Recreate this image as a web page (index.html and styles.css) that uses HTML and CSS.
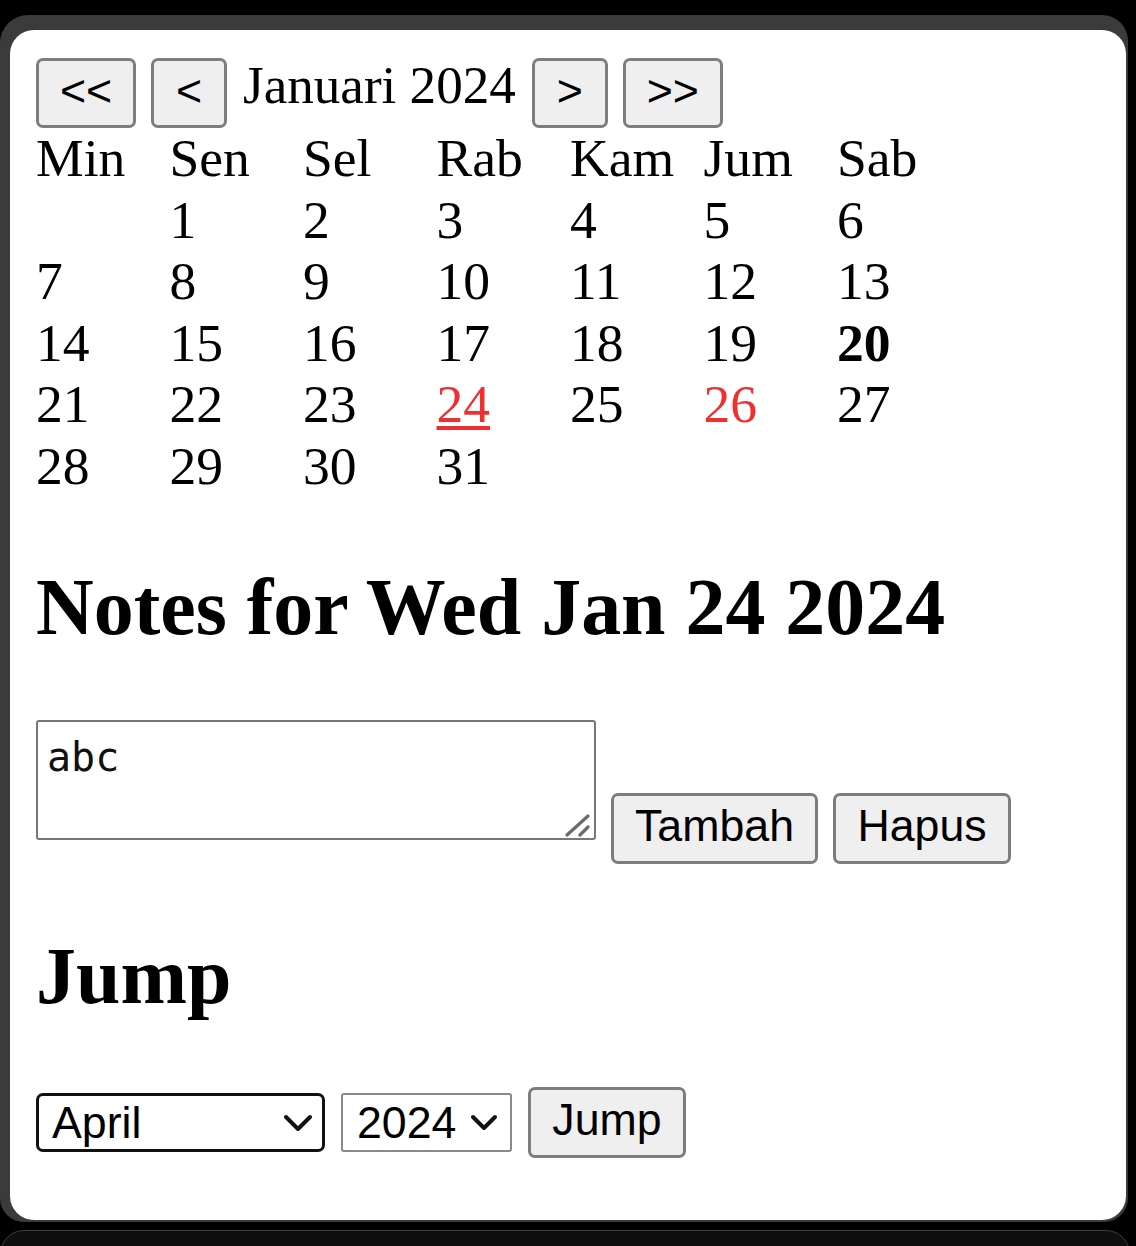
FILE: index.html
```html
<!DOCTYPE html>
<html lang="id">
<head>
<meta charset="utf-8">
<title>Kalender</title>
<link rel="stylesheet" href="styles.css">
</head>
<body>
<div class="frame">
  <div class="panel">
    <div class="nav">
      <button class="btn nav-wide">&lt;&lt;</button>
      <button class="btn nav-narrow">&lt;</button>
      <span class="month">Januari 2024</span>
      <button class="btn nav-narrow">&gt;</button>
      <button class="btn nav-wide">&gt;&gt;</button>
    </div>
    <div class="cal">
      <div>Min</div><div>Sen</div><div>Sel</div><div>Rab</div><div>Kam</div><div>Jum</div><div>Sab</div>
      <div></div><div>1</div><div>2</div><div>3</div><div>4</div><div>5</div><div>6</div>
      <div>7</div><div>8</div><div>9</div><div>10</div><div>11</div><div>12</div><div>13</div>
      <div>14</div><div>15</div><div>16</div><div>17</div><div>18</div><div>19</div><div class="today">20</div>
      <div>21</div><div>22</div><div>23</div><div class="selected">24</div><div>25</div><div class="has-note">26</div><div>27</div>
      <div>28</div><div>29</div><div>30</div><div>31</div>
    </div>

    <h2 class="title">Notes for Wed Jan 24 2024</h2>

    <div class="note-row">
      <div class="ta-wrap">
        <textarea class="note">abc</textarea>
        <svg class="grip" width="26" height="24" viewBox="0 0 26 24"><path d="M2 22 L23 3 M15 22 L23 14" stroke="#6b6b6b" stroke-width="3.2" stroke-linecap="round" fill="none"/></svg>
      </div>
      <button class="btn btn-add">Tambah</button>
      <button class="btn btn-del">Hapus</button>
    </div>

    <h2 class="title jump-title">Jump</h2>

    <div class="jump-row">
      <div class="sel-wrap">
        <select class="sel sel-month focused"><option>April</option></select>
        <svg class="chev chev-month" width="32" height="22" viewBox="0 0 32 22"><path d="M4 5 L16 17 L28 5" stroke="#111" stroke-width="4" stroke-linecap="round" stroke-linejoin="round" fill="none"/></svg>
      </div>
      <div class="sel-wrap">
        <select class="sel sel-year"><option>2024</option></select>
        <svg class="chev chev-year" width="30" height="22" viewBox="0 0 30 22"><path d="M4 5 L15 16 L26 5" stroke="#111" stroke-width="4" stroke-linecap="round" stroke-linejoin="round" fill="none"/></svg>
      </div>
      <button class="btn btn-jump">Jump</button>
    </div>
  </div>
</div>
<div class="next"></div>
</body>
</html>
```

FILE: styles.css
```css
html, body {
  margin: 0;
  padding: 0;
  background: #000;
  height: 1246px;
  overflow: hidden;
}

.frame {
  box-sizing: border-box;
  margin-top: 15px;
  width: 1128px;
  height: 1207px;
  background: #3b3b3b;
  border-radius: 28px 26px 24px 24px;
  padding: 15px 2px 2px 10px;
}

.panel {
  box-sizing: border-box;
  height: 100%;
  background: #fff;
  border-radius: 24px;
  padding: 28px 26px 0 26px;
  font-family: "Liberation Serif", "Times New Roman", serif;
  color: #000;
}

.next {
  box-sizing: border-box;
  margin-top: 8px;
  width: 1130px;
  height: 40px;
  background: #0e0e0f;
  border: 1px solid #3d3d3f;
  border-radius: 24px 24px 0 0;
}

/* buttons */
.btn {
  box-sizing: border-box;
  font-family: "Liberation Sans", Arial, sans-serif;
  font-size: 44.7px;
  color: #000;
  background: #efefef;
  border: 3px solid #7d7d7d;
  border-radius: 7px;
  padding: 0 0 5px 0;
  margin: 0;
  text-align: center;
}

/* header navigation */
.nav {
  display: flex;
  align-items: flex-start;
  gap: 15px;
  height: 70px;
}
.nav .btn {
  height: 70px;
}
.nav-wide { width: 100px; }
.nav-narrow { width: 76px; }
.month {
  font-size: 53.1px;
  line-height: 54px;
  margin: 0 1px;
}

/* calendar grid */
.cal {
  display: grid;
  grid-template-columns: repeat(7, 133.5px);
  grid-auto-rows: 61.6px;
  font-size: 53.6px;
  line-height: 61.6px;
}
.today { font-weight: bold; }
.selected {
  color: #ee3030;
  text-decoration: underline;
  text-decoration-thickness: 4px;
  text-underline-offset: 4px;
}
.has-note { color: #ee3030; }

/* headings */
.title {
  font-size: 79.9px;
  font-weight: bold;
  line-height: 92px;
  margin: 63px 0 67px 0;
}
.jump-title {
  margin: 66px 0 65px 0;
}

/* note row */
.note-row {
  display: flex;
  align-items: flex-end;
  gap: 15px;
}
.ta-wrap {
  position: relative;
  margin-bottom: 24px;
}
.note {
  display: block;
  box-sizing: border-box;
  width: 560px;
  height: 120px;
  border: 2px solid #777;
  border-radius: 3px;
  padding: 9px 9px;
  margin: 0;
  font-family: "DejaVu Sans Mono", "Liberation Mono", monospace;
  font-size: 40px;
  line-height: 52px;
  color: #111;
  resize: none;
  background: #fff;
}
.grip {
  position: absolute;
  right: 5px;
  bottom: 3px;
  pointer-events: none;
}
.btn-add { width: 207px; height: 71px; }
.btn-del { width: 178px; height: 71px; }

/* jump row */
.jump-row {
  display: flex;
  align-items: center;
  gap: 16px;
}
.sel-wrap {
  position: relative;
}
.sel {
  display: block;
  box-sizing: border-box;
  appearance: none;
  -webkit-appearance: none;
  height: 59px;
  margin: 0;
  font-family: "Liberation Sans", Arial, sans-serif;
  font-size: 44.7px;
  color: #000;
  background: #fff;
  padding: 0 0 0 14px;
}
.sel-month {
  width: 289px;
  border: 3px solid #111;
  border-radius: 7px;
  padding-left: 13px;
}
.sel-year {
  width: 171px;
  border: 2px solid #8a8a8a;
  border-radius: 3px;
}
.chev {
  position: absolute;
  top: 19px;
  pointer-events: none;
}
.chev-month { right: 11px; }
.chev-year { right: 13px; }
.btn-jump { width: 158px; height: 71px; }
```
